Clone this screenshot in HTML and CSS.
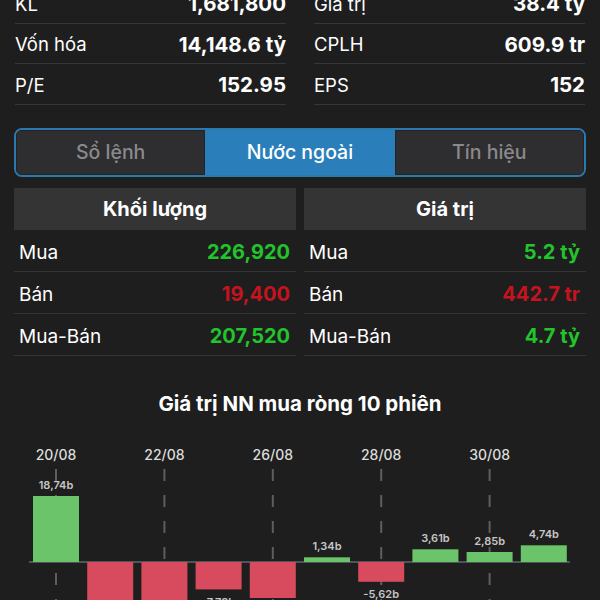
FILE: index.html
```html
<!DOCTYPE html>
<html lang="vi">
<head>
    <meta charset="UTF-8">
    <meta name="viewport" content="width=device-width, initial-scale=1.0">
    <title>Nước ngoài</title>
    <link rel="stylesheet" href="styles.css">
</head>
<body>
    <section class="stats">
        <div class="stat-col">
            <div class="stat-row"><span>KL</span><b>1,681,800</b></div>
            <div class="stat-row"><span>Vốn hóa</span><b>14,148.6 tỷ</b></div>
            <div class="stat-row"><span>P/E</span><b>152.95</b></div>
        </div>
        <div class="stat-col">
            <div class="stat-row"><span>Giá trị</span><b>38.4 tỷ</b></div>
            <div class="stat-row"><span>CPLH</span><b>609.9 tr</b></div>
            <div class="stat-row"><span>EPS</span><b>152</b></div>
        </div>
    </section>

    <nav class="tabs">
        <div class="tab">Sổ lệnh</div>
        <div class="tab active">Nước ngoài</div>
        <div class="tab">Tín hiệu</div>
    </nav>

    <section class="foreign">
        <div class="foreign-col">
            <div class="col-head">Khối lượng</div>
            <div class="data-row"><span>Mua</span><b class="up">226,920</b></div>
            <div class="data-row"><span>Bán</span><b class="down">19,400</b></div>
            <div class="data-row"><span>Mua-Bán</span><b class="up">207,520</b></div>
        </div>
        <div class="foreign-col">
            <div class="col-head">Giá trị</div>
            <div class="data-row"><span>Mua</span><b class="up">5.2 tỷ</b></div>
            <div class="data-row"><span>Bán</span><b class="down">442.7 tr</b></div>
            <div class="data-row"><span>Mua-Bán</span><b class="up">4.7 tỷ</b></div>
        </div>
    </section>

    <h2 class="chart-title">Giá trị NN mua ròng 10 phiên</h2>

    <svg class="chart" width="600" height="170" viewBox="0 0 600 170">
        <!-- grid lines -->
        <g class="grid">
            <line x1="56" y1="38" x2="56" y2="170"/>
            <line x1="164.4" y1="38" x2="164.4" y2="170"/>
            <line x1="272.8" y1="38" x2="272.8" y2="170"/>
            <line x1="381.2" y1="38" x2="381.2" y2="170"/>
            <line x1="489.6" y1="38" x2="489.6" y2="170"/>
        </g>
        <g class="dates">
            <text x="56" y="29">20/08</text>
            <text x="164.4" y="29">22/08</text>
            <text x="272.8" y="29">26/08</text>
            <text x="381.2" y="29">28/08</text>
            <text x="489.6" y="29">30/08</text>
        </g>
        <line class="axis" x1="29" y1="131" x2="570" y2="131"/>
        <!-- bars -->
        <rect class="bar-up" x="33" y="65" width="46" height="66"/>
        <rect class="bar-down" x="87.2" y="131" width="46" height="47"/>
        <rect class="bar-down" x="141.4" y="131" width="46" height="45"/>
        <rect class="bar-down" x="195.6" y="131" width="46" height="27.4"/>
        <rect class="bar-down" x="249.8" y="131" width="46" height="36"/>
        <rect class="bar-up" x="304" y="126.3" width="46" height="4.7"/>
        <rect class="bar-down" x="358.2" y="131" width="46" height="19.8"/>
        <rect class="bar-up" x="412.4" y="118.3" width="46" height="12.7"/>
        <rect class="bar-up" x="466.6" y="121" width="46" height="10"/>
        <rect class="bar-up" x="520.8" y="114.3" width="46" height="16.7"/>
        <g class="values">
            <text x="56" y="58">18,74b</text>
            <text x="218.6" y="175">-7,78b</text>
            <text x="327" y="119">1,34b</text>
            <text x="381.2" y="167">-5,62b</text>
            <text x="435.4" y="111">3,61b</text>
            <text x="489.6" y="114">2,85b</text>
            <text x="543.8" y="107">4,74b</text>
        </g>
    </svg>
</body>
</html>
```

FILE: styles.css
```css
body {
    background-color: #1e1e1e;
    color: white;
    font-family: Inter, "Liberation Sans", Arial, sans-serif;
    margin: 0;
    padding: 0;
    overflow: hidden;
}
.stats {
    display: grid;
    grid-template-columns: 1fr 1fr;
    gap: 28px;
    padding: 0 15px;
    margin-top: -17px;
}
.stat-row {
    display: flex;
    justify-content: space-between;
    align-items: center;
    height: 40.5px;
    box-sizing: border-box;
    padding-top: 2px;
    border-bottom: 1px solid #363638;
    font-size: 18.5px;
}
.stat-row b {
    font-size: 20.5px;
    font-weight: 700;
}
.tabs {
    display: flex;
    margin: 23.5px 14px 0;
    height: 49px;
    box-sizing: border-box;
    border: 2px solid #2c79ad;
    border-radius: 8px;
    overflow: hidden;
}
.tab {
    flex: 1;
    display: flex;
    align-items: center;
    justify-content: center;
    padding-bottom: 2px;
    background-color: #2e2e30;
    border: 1px solid #242426;
    color: #8a8a8c;
    font-size: 19.5px;
    font-weight: 500;
}
.tab.active {
    background-color: #2a7fbb;
    border-color: #2a7fbb;
    color: white;
}
.foreign {
    display: grid;
    grid-template-columns: 1fr 1fr;
    gap: 8px;
    padding: 0 14px;
    margin-top: 11px;
}
.col-head {
    height: 42px;
    display: flex;
    align-items: center;
    justify-content: center;
    background-color: #343434;
    font-size: 20px;
    font-weight: 700;
}
.data-row {
    display: flex;
    justify-content: space-between;
    align-items: center;
    height: 42px;
    box-sizing: border-box;
    padding: 3px 6px 0 5px;
    border-bottom: 1px solid #343436;
    font-size: 19px;
}
.data-row b {
    font-size: 20px;
    font-weight: 700;
}
.up {
    color: #22c42c;
}
.down {
    color: #c3141f;
}
.chart-title {
    margin: 36px 0 0;
    height: 24px;
    line-height: 24px;
    text-align: center;
    font-size: 20.5px;
    font-weight: 700;
}
.chart {
    display: block;
    margin-top: 15px;
}
.grid line {
    stroke: #5e5e60;
    stroke-width: 2;
    stroke-dasharray: 12 14;
}
.dates text {
    fill: #dcdcdc;
    font-size: 14px;
    font-weight: 500;
    text-anchor: middle;
}
.axis {
    stroke: #4c5458;
    stroke-width: 2;
}
.bar-up {
    fill: #6cc46a;
}
.bar-down {
    fill: #d84a5d;
}
.values text {
    fill: #c6c6c6;
    font-size: 11px;
    font-weight: 600;
    text-anchor: middle;
}
```
